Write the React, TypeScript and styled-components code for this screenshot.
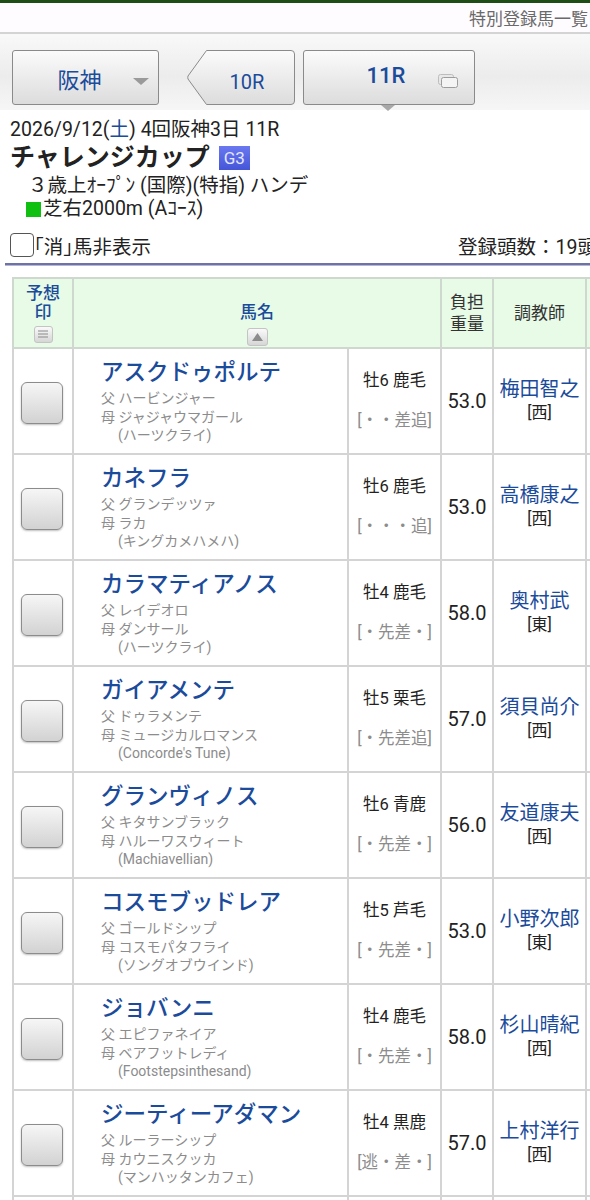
import React from "react"
import styled, { createGlobalStyle } from "styled-components"

//------------------------------
// Data
//------------------------------
type Horse = {
  name: string
  sire: string
  dam: string
  damSire: string
  sex: string
  style: string
  weight: string
  trainer: string
  area: string
}

const horses: Horse[] = [
  { name: "アスクドゥポルテ", sire: "ハービンジャー", dam: "ジャジャウマガール", damSire: "(ハーツクライ)", sex: "牡6 鹿毛", style: "[・・差追]", weight: "53.0", trainer: "梅田智之", area: "[西]" },
  { name: "カネフラ", sire: "グランデッツァ", dam: "ラカ", damSire: "(キングカメハメハ)", sex: "牡6 鹿毛", style: "[・・・追]", weight: "53.0", trainer: "高橋康之", area: "[西]" },
  { name: "カラマティアノス", sire: "レイデオロ", dam: "ダンサール", damSire: "(ハーツクライ)", sex: "牡4 鹿毛", style: "[・先差・]", weight: "58.0", trainer: "奥村武", area: "[東]" },
  { name: "ガイアメンテ", sire: "ドゥラメンテ", dam: "ミュージカルロマンス", damSire: "(Concorde's Tune)", sex: "牡5 栗毛", style: "[・先差追]", weight: "57.0", trainer: "須貝尚介", area: "[西]" },
  { name: "グランヴィノス", sire: "キタサンブラック", dam: "ハルーワスウィート", damSire: "(Machiavellian)", sex: "牡6 青鹿", style: "[・先差・]", weight: "56.0", trainer: "友道康夫", area: "[西]" },
  { name: "コスモブッドレア", sire: "ゴールドシップ", dam: "コスモパタフライ", damSire: "(ソングオブウインド)", sex: "牡5 芦毛", style: "[・先差・]", weight: "53.0", trainer: "小野次郎", area: "[東]" },
  { name: "ジョバンニ", sire: "エピファネイア", dam: "ベアフットレディ", damSire: "(Footstepsinthesand)", sex: "牡4 鹿毛", style: "[・先差・]", weight: "58.0", trainer: "杉山晴紀", area: "[西]" },
  { name: "ジーティーアダマン", sire: "ルーラーシップ", dam: "カウニスクッカ", damSire: "(マンハッタンカフェ)", sex: "牡4 黒鹿", style: "[逃・差・]", weight: "57.0", trainer: "上村洋行", area: "[西]" },
]

//------------------------------
// Main
//------------------------------
export default function App() {
  return (
    <>
      <GlobalStyle />
      <Page>
        <TopLine />
        <TitleBar>特別登録馬一覧</TitleBar>
        <NavBar>
          <AreaButton>
            <span>阪神</span>
            <DropArrow />
          </AreaButton>
          <PrevButton>
            <svg width="108" height="55" viewBox="0 0 108 55">
              <defs>
                <linearGradient id="pg" x1="0" y1="0" x2="0" y2="1">
                  <stop offset="0" stopColor="#fbfbfb" />
                  <stop offset="1" stopColor="#dcdcdc" />
                </linearGradient>
              </defs>
              <path
                d="M19.5 0.5 H104 Q107.5 0.5 107.5 4 V51 Q107.5 54.5 104 54.5 H19.5 L1 29 Q0.5 27.5 1 26 Z"
                fill="url(#pg)"
                stroke="#8a8a8a"
                strokeWidth="1"
              />
            </svg>
            <span>10R</span>
          </PrevButton>
          <CurrentButton>
            <span>11R</span>
            <WindowIcon>
              <svg width="20" height="14" viewBox="0 0 20 14">
                <rect x="0.5" y="0.5" width="15" height="10" rx="2" fill="#e8e8e8" stroke="#bdbdbd" />
                <rect x="3.5" y="3.5" width="16" height="10" rx="2" fill="#f4f4f4" stroke="#9c9c9c" />
              </svg>
            </WindowIcon>
          </CurrentButton>
        </NavBar>

        <RaceInfo>
          <DateLine>
            2026/9/12(<Sat>土</Sat>) 4回阪神3日 11R
          </DateLine>
          <RaceName>
            チャレンジカップ <Grade>G3</Grade>
          </RaceName>
          <Condition>３歳上ｵｰﾌﾟﾝ (国際)(特指) ハンデ</Condition>
          <Course>
            <TurfMark />芝右2000m (Aｺｰｽ)
          </Course>
        </RaceInfo>

        <OptionRow>
          <HideToggle>
            <CheckBox />
            ｢消｣馬非表示
          </HideToggle>
          <Count>登録頭数：19頭</Count>
        </OptionRow>
        <Divider />

        <Table>
          <colgroup>
            <col style={{ width: 60 }} />
            <col style={{ width: 275 }} />
            <col style={{ width: 93 }} />
            <col style={{ width: 52 }} />
            <col style={{ width: 93 }} />
            <col style={{ width: 60 }} />
          </colgroup>
          <thead>
            <tr>
              <Th $blue>
                <HeadStack>
                  予想
                  <br />印
                  <SortIcon $small>
                    <svg width="10" height="8" viewBox="0 0 10 8">
                      <path d="M0 1h10M0 4h10M0 7h10" stroke="#8a8a8a" strokeWidth="1.2" />
                    </svg>
                  </SortIcon>
                </HeadStack>
              </Th>
              <Th $blue colSpan={2}>
                <HeadStack $top={22}>
                  馬名
                  <SortIcon>
                    <svg width="11" height="8" viewBox="0 0 11 8">
                      <path d="M5.5 0L11 8H0Z" fill="#8c8c8c" />
                    </svg>
                  </SortIcon>
                </HeadStack>
              </Th>
              <Th>
                負担
                <br />
                重量
              </Th>
              <Th>調教師</Th>
              <Th />
            </tr>
          </thead>
          <tbody>
            {horses.map((h) => (
              <HorseRow key={h.name} horse={h} />
            ))}
            <tr>
              <Td />
              <Td />
              <Td />
              <Td />
              <Td />
              <Td />
            </tr>
          </tbody>
        </Table>
      </Page>
    </>
  )
}

const HorseRow = ({ horse }: { horse: Horse }) => {
  return (
    <tr>
      <Td>
        <MarkButton />
      </Td>
      <NameCell>
        <HorseName>{horse.name}</HorseName>
        <Pedigree>
          父 {horse.sire}
          <br />母 {horse.dam}
          <br />
          <DamSire>{horse.damSire}</DamSire>
        </Pedigree>
      </NameCell>
      <SexCell>
        <div>{horse.sex}</div>
        <RunStyle>{horse.style}</RunStyle>
      </SexCell>
      <WeightCell>{horse.weight}</WeightCell>
      <TrainerCell>
        <TrainerName>{horse.trainer}</TrainerName>
        <div>{horse.area}</div>
      </TrainerCell>
      <Td />
    </tr>
  )
}

//------------------------------
// スタイル
//------------------------------
const GlobalStyle = createGlobalStyle`
  html, body {
    margin: 0;
    padding: 0;
    background: #fff;
    overflow-x: hidden;
  }
  body {
    font-family: Roboto, "Noto Sans CJK JP", sans-serif;
    color: #222;
  }
`

const Page = styled.div`
  width: 590px;
  height: 1200px;
  overflow: hidden;
`

const TopLine = styled.div`
  height: 3px;
  background: #1f4d16;
`

const TitleBar = styled.div`
  display: flex;
  justify-content: flex-end;
  align-items: center;
  height: 29px;
  padding-right: 2px;
  background: #fffcff;
  border-bottom: 2px solid #d4d4d4;
  font-size: 17px;
  color: #6a6a6a;
`

const NavBar = styled.div`
  display: flex;
  align-items: flex-start;
  height: 76px;
  padding: 16px 0 0 12px;
  box-sizing: border-box;
  background: linear-gradient(#f9f9f9, #ececec 55%, #f6f6f6);
`

const ButtonBase = styled.div`
  position: relative;
  display: flex;
  align-items: center;
  justify-content: center;
  height: 55px;
  box-sizing: border-box;
  font-size: 21px;
  color: #1b4b9b;
`

const AreaButton = styled(ButtonBase)`
  width: 147px;
  border: 1px solid #8a8a8a;
  border-radius: 3px;
  background: linear-gradient(#fbfbfb, #dcdcdc);
  padding-right: 12px;
  span {
    font-size: 22px;
  }
`

const DropArrow = styled.div`
  position: absolute;
  right: 9px;
  top: 27px;
  width: 0;
  height: 0;
  border-left: 8px solid transparent;
  border-right: 8px solid transparent;
  border-top: 7px solid #9a9a9a;
`

const PrevButton = styled(ButtonBase)`
  width: 108px;
  margin-left: 28px;
  svg {
    position: absolute;
    inset: 0;
  }
  span {
    position: relative;
    margin-top: 8px;
    padding-left: 12px;
    font-size: 20px;
  }
`

const CurrentButton = styled(ButtonBase)`
  width: 172px;
  margin-left: 8px;
  border: 1px solid #8a8a8a;
  border-radius: 3px;
  background: linear-gradient(#fbfbfb, #dcdcdc);
  span {
    margin-top: -4px;
    margin-right: 6px;
    font-size: 22px;
    font-weight: 500;
  }
  &::after {
    content: "";
    position: absolute;
    left: 77px;
    bottom: -7px;
    border-left: 7px solid transparent;
    border-right: 7px solid transparent;
    border-top: 6px solid #a8a8a8;
  }
`

const WindowIcon = styled.div`
  position: absolute;
  right: 16px;
  top: 23px;
  display: flex;
`

const RaceInfo = styled.div`
  padding: 7px 0 0 10px;
  font-size: 19.5px;
`

const DateLine = styled.div`
  line-height: 26px;
  color: #222;
`

const Sat = styled.span`
  color: #1b4b9b;
`

const RaceName = styled.div`
  display: flex;
  align-items: center;
  gap: 9px;
  font-size: 25px;
  line-height: 30px;
  font-weight: 700;
  color: #222;
`

const Grade = styled.span`
  display: inline-flex;
  align-items: center;
  justify-content: center;
  width: 31px;
  height: 24px;
  background: linear-gradient(#6a78f0, #4455d8);
  color: #e4e8ff;
  font-size: 17px;
  font-weight: 400;
`

const Condition = styled.div`
  padding-left: 18px;
  line-height: 25px;
`

const Course = styled.div`
  display: flex;
  align-items: center;
  padding-left: 16px;
  line-height: 22px;
`

const TurfMark = styled.span`
  display: inline-block;
  width: 15px;
  height: 15px;
  margin-right: 2px;
  background: #10c010;
`

const OptionRow = styled.div`
  display: flex;
  align-items: center;
  justify-content: space-between;
  height: 30px;
  margin-top: 10px;
  padding-left: 10px;
`

const HideToggle = styled.div`
  display: flex;
  align-items: center;
  font-size: 19.5px;
  color: #222;
`

const CheckBox = styled.span`
  display: inline-block;
  width: 22px;
  height: 22px;
  border: 1.5px solid #555;
  border-radius: 4px;
  background: #fff;
`

const Count = styled.div`
  font-size: 19.5px;
  white-space: nowrap;
  margin-right: -7px;
  color: #222;
`

const Divider = styled.div`
  height: 2px;
  margin: 3px 0 11px 5px;
  background: #6e72a4;
  border-bottom: 1px solid #b4b6d4;
`

const Table = styled.table`
  table-layout: fixed;
  width: 633px;
  margin-left: 12px;
  border-collapse: collapse;
  font-family: Roboto, "Noto Sans CJK JP", sans-serif;
`

const Th = styled.th<{ $blue?: boolean }>`
  height: 68px;
  padding: 0;
  background: #e7fbe7;
  border: 2px solid #cfd8cf;
  font-size: 17px;
  font-weight: 400;
  line-height: 22px;
  color: ${(p) => (p.$blue ? "#1b4b9b" : "#333")};
  vertical-align: middle;
  text-align: center;
`

const HeadStack = styled.div<{ $top?: number }>`
  display: flex;
  flex-direction: column;
  align-items: center;
  padding-top: ${(p) => p.$top ?? 0}px;
  font-weight: 500;
  line-height: 19px;
`

const SortIcon = styled.span<{ $small?: boolean }>`
  display: flex;
  align-items: center;
  justify-content: center;
  width: ${(p) => (p.$small ? 17 : 19)}px;
  height: ${(p) => (p.$small ? 15 : 16)}px;
  margin-top: ${(p) => (p.$small ? 4 : 6)}px;
  border-radius: 3px;
  border: 1px solid #c4c4c4;
  background: linear-gradient(#fafafa, #d6d6d6);
`

const Td = styled.td`
  height: 104px;
  padding: 0;
  border: 2px solid #d4d4d4;
  background: #fff;
  vertical-align: middle;
  text-align: center;
`

const MarkButton = styled.div`
  width: 42px;
  height: 42px;
  margin: 4px auto 0 7px;
  box-sizing: border-box;
  border: 1px solid #8c8c8c;
  border-radius: 6px;
  background: linear-gradient(#f6f6f6, #d2d2d2);
  box-shadow: 0 1px 2px rgba(0, 0, 0, 0.25);
`

const NameCell = styled(Td)`
  height: 95px;
  vertical-align: top;
  text-align: left;
  padding: 9px 0 0 27px;
`

const HorseName = styled.div`
  font-size: 22.5px;
  line-height: 28px;
  font-weight: 500;
  color: #1b4b9b;
  white-space: nowrap;
`

const Pedigree = styled.div`
  margin-top: 3px;
  font-size: 14px;
  line-height: 18.5px;
  color: #8c8c8c;
  white-space: nowrap;
`

const DamSire = styled.span`
  padding-left: 17px;
`

const SexCell = styled(Td)`
  font-size: 16.5px;
  line-height: 20px;
  color: #222;
`

const RunStyle = styled.div`
  margin-top: 20px;
  color: #8c8c8c;
`

const WeightCell = styled(Td)`
  font-size: 20px;
  color: #222;
`

const TrainerCell = styled(Td)`
  font-size: 16px;
  line-height: 24px;
  color: #222;
`

const TrainerName = styled.div`
  font-size: 20px;
  color: #1b4b9b;
  white-space: nowrap;
`
